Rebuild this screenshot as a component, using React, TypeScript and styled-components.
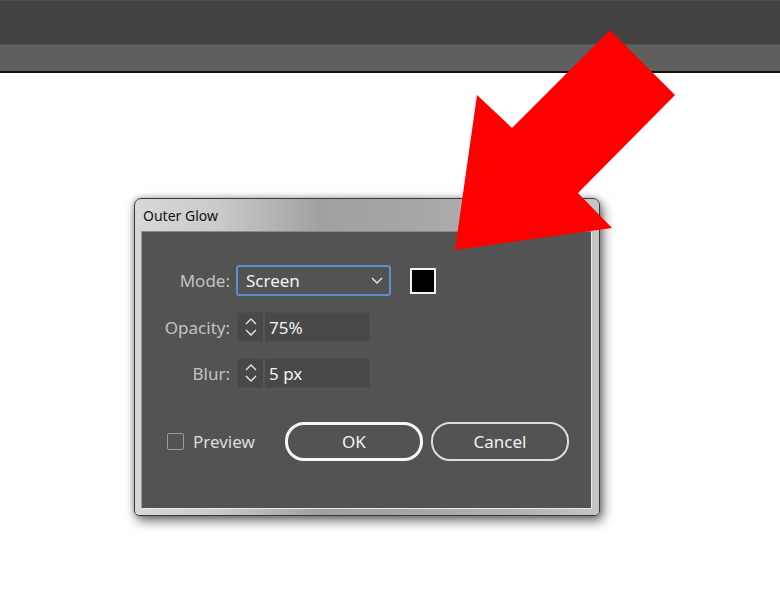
import React, { useState } from "react";
import styled, { createGlobalStyle } from "styled-components";

const GlobalStyle = createGlobalStyle`
  html, body {
    margin: 0;
    padding: 0;
    background: #ffffff;
  }
  body {
    font-family: "Noto Sans", "Open Sans", sans-serif;
  }
`;

const Page = styled.div`
  position: relative;
  width: 780px;
  height: 612px;
  overflow: hidden;
  display: flex;
  flex-direction: column;
`;

const TopBar = styled.div`
  height: 43px;
  background: #434343;
  border-top: 1px solid #4d4d4d;
`;

const SubBar = styled.div`
  height: 26px;
  background: #5f5f5f;
  border-top: 1px solid #555;
  border-bottom: 2px solid #111;
`;

const Canvas = styled.div`
  flex: 1;
  background: #fff;
  padding: 125px 0 0 134px;
`;

const Window = styled.div`
  width: 466px;
  height: 318px;
  box-sizing: border-box;
  border: 1px solid #3a3a3a;
  border-radius: 7px 7px 5px 5px;
  background: linear-gradient(
    90deg,
    #d8d8d8 0%,
    #cacaca 18%,
    #a0a0a0 40%,
    #a6a6a6 60%,
    #b4b4b4 85%,
    #c6c6c6 100%
  );
  box-shadow: 3px 5px 12px rgba(0, 0, 0, 0.55), 0 0 6px rgba(0, 0, 0, 0.3);
  display: flex;
  flex-direction: column;
  padding: 0 7px 6px 6px;
`;

const TitleBar = styled.div`
  height: 32px;
  display: flex;
  align-items: center;
  padding-left: 2px;
  font-size: 14px;
  color: #111;
`;

const Panel = styled.div`
  flex: 1;
  background: #535353;
  border: 1px solid #e8e8e8;
  border-top-color: #8a8a8a;
  border-left-color: #9a9a9a;
  padding: 33px 0 0 22px;
  display: flex;
  flex-direction: column;
`;

const Form = styled.div`
  display: grid;
  grid-template-columns: 66px auto;
  column-gap: 6px;
  row-gap: 16px;
  align-items: center;
`;

const Label = styled.div`
  text-align: right;
  font-size: 17px;
  color: #c2c2c2;
`;

const Line = styled.div`
  display: flex;
  align-items: center;
`;

const Select = styled.div`
  width: 155px;
  height: 31px;
  box-sizing: border-box;
  border: 2px solid #5b8ed2;
  border-radius: 3px;
  display: flex;
  align-items: center;
  justify-content: space-between;
  padding: 0 6px 0 8px;
  font-size: 17px;
  color: #f2f2f2;
`;

const Swatch = styled.div`
  width: 26px;
  height: 26px;
  box-sizing: border-box;
  margin-left: 19px;
  border: 2px solid #f4f4f4;
  background: #000;
`;

const Field = styled.div`
  width: 133px;
  height: 30px;
  box-sizing: border-box;
  display: flex;
  align-items: stretch;
  background: #484848;
  border: 1px solid #4e4e4e;
  border-radius: 3px;
  margin-left: 1px;
`;

const Spinner = styled.div`
  width: 25px;
  display: flex;
  align-items: center;
  justify-content: center;
  border-right: 2px solid #555;
`;

const Value = styled.div`
  display: flex;
  align-items: center;
  padding-left: 4px;
  font-size: 17px;
  color: #f2f2f2;
`;

const Footer = styled.div`
  display: flex;
  align-items: center;
  margin-top: 34px;
`;

const Check = styled.label`
  display: flex;
  align-items: center;
  gap: 9px;
  width: 121px;
  padding-left: 3px;
  box-sizing: border-box;
  font-size: 17px;
  color: #dcdcdc;
  cursor: pointer;
`;

const Box = styled.span<{ $on: boolean }>`
  width: 17px;
  height: 17px;
  box-sizing: border-box;
  border: 1px solid #9a9a9a;
  border-radius: 2px;
  background: ${(p) => (p.$on ? "#5b8ed2" : "transparent")};
`;

const Button = styled.button<{ $primary?: boolean }>`
  width: 138px;
  height: 39px;
  box-sizing: border-box;
  margin-right: 8px;
  border-radius: 19px;
  border: ${(p) => (p.$primary ? "3px solid #f6f6f6" : "2px solid #dedede")};
  background: transparent;
  color: #f2f2f2;
  font-family: "Noto Sans", "Open Sans", sans-serif;
  font-size: 17px;
  cursor: pointer;
`;

const Arrow = styled.svg`
  position: absolute;
  left: 0;
  top: 0;
  pointer-events: none;
`;

const Chevron = ({ up }: { up?: boolean }) => (
  <svg width="12" height="7" viewBox="0 0 12 7">
    <path
      d={up ? "M1 6 L6 1 L11 6" : "M1 1 L6 6 L11 1"}
      fill="none"
      stroke="#e8e8e8"
      strokeWidth="1.4"
    />
  </svg>
);

const Spin = () => (
  <Spinner>
    <svg width="14" height="22" viewBox="0 0 14 22">
      <path d="M2 8 L7 3 L12 8" fill="none" stroke="#e4e4e4" strokeWidth="1.4" />
      <path d="M2 14 L7 19 L12 14" fill="none" stroke="#e4e4e4" strokeWidth="1.4" />
    </svg>
  </Spinner>
);

const App = () => {
  const [preview, setPreview] = useState(false);

  return (
    <>
      <GlobalStyle />
      <Page>
        <TopBar />
        <SubBar />
        <Canvas>
          <Window>
            <TitleBar>Outer Glow</TitleBar>
            <Panel>
              <Form>
                <Label>Mode:</Label>
                <Line>
                  <Select>
                    Screen
                    <Chevron />
                  </Select>
                  <Swatch />
                </Line>

                <Label>Opacity:</Label>
                <Field>
                  <Spin />
                  <Value>75%</Value>
                </Field>

                <Label>Blur:</Label>
                <Field>
                  <Spin />
                  <Value>5 px</Value>
                </Field>
              </Form>

              <Footer>
                <Check onClick={() => setPreview(!preview)}>
                  <Box $on={preview} />
                  Preview
                </Check>
                <Button $primary>OK</Button>
                <Button>Cancel</Button>
              </Footer>
            </Panel>
          </Window>
        </Canvas>

        <Arrow width="780" height="612" viewBox="0 0 780 612">
          <polygon
            points="610,30 675,95 578,193 612,228 455,250 477,95 512,128"
            fill="#ff0000"
          />
        </Arrow>
      </Page>
    </>
  );
};

export default App;
